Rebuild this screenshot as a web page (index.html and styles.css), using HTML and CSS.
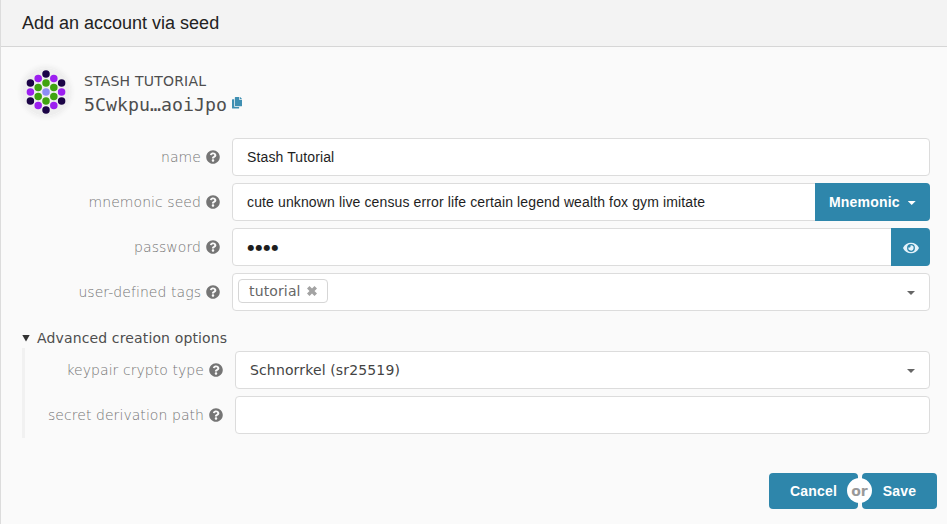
FILE: index.html
```
<!DOCTYPE html>
<html lang="en">
<head>
<meta charset="utf-8">
<title>Add an account via seed</title>
<link rel="stylesheet" href="styles.css">
</head>
<body>
<svg class="defs" width="0" height="0" aria-hidden="true">
  <symbol id="help" viewBox="0 0 512 512"><path d="M504 256c0 136.997-111.043 248-248 248S8 392.997 8 256C8 119.083 119.043 8 256 8s248 111.083 248 248zM262.655 90c-54.497 0-89.255 22.957-116.549 63.758-3.536 5.286-2.353 12.415 2.715 16.258l34.699 26.31c5.205 3.947 12.621 3.008 16.665-2.122 17.864-22.658 30.113-35.797 57.303-35.797 20.429 0 45.698 13.148 45.698 32.958 0 14.976-12.363 22.667-32.534 33.976C247.128 238.528 216 254.941 216 296v4c0 6.627 5.373 12 12 12h56c6.627 0 12-5.373 12-12v-1.333c0-28.462 83.186-29.647 83.186-106.667 0-58.002-60.165-102-116.531-102zM256 338c-25.365 0-46 20.635-46 46 0 25.364 20.635 46 46 46s46-20.636 46-46c0-25.365-20.635-46-46-46z"/></symbol>
</svg>
<main class="modal">
  <header class="modal-header">Add an account via seed</header>
  <form class="content">
    <section class="address">
      <svg class="identicon" viewBox="0 0 64 64">
        <circle cx="32" cy="32" r="32" fill="#eee"/>
        <g fill="#1b0446"><circle cx="32" cy="8" r="5"/><circle cx="11.2" cy="20" r="5"/><circle cx="11.2" cy="44" r="5"/><circle cx="32" cy="56" r="5"/><circle cx="52.8" cy="44" r="5"/><circle cx="52.8" cy="20" r="5"/></g>
        <g fill="#9c1ff0"><circle cx="21.6" cy="14" r="5"/><circle cx="11.2" cy="32" r="5"/><circle cx="21.6" cy="50" r="5"/><circle cx="42.4" cy="50" r="5"/><circle cx="52.8" cy="32" r="5"/><circle cx="42.4" cy="14" r="5"/></g>
        <g fill="#3fa30f"><circle cx="32" cy="20" r="5"/><circle cx="21.6" cy="26" r="5"/><circle cx="21.6" cy="38" r="5"/><circle cx="32" cy="44" r="5"/><circle cx="42.4" cy="38" r="5"/><circle cx="42.4" cy="26" r="5"/></g>
        <circle cx="32" cy="32" r="5" fill="#8c8cf5"/>
      </svg>
      <div class="identity">
        <div class="account-name">STASH TUTORIAL</div>
        <div class="account-id"><span>5Cwkpu…aoiJpo</span>
          <svg class="copy" viewBox="0 0 448 512"><path d="M320 448v40c0 13.255-10.745 24-24 24H24c-13.255 0-24-10.745-24-24V120c0-13.255 10.745-24 24-24h72v296c0 30.879 25.121 56 56 56h168zm0-344V0H152c-13.255 0-24 10.745-24 24v368c0 13.255 10.745 24 24 24h272c13.255 0 24-10.745 24-24V128H344c-13.2 0-24-10.8-24-24zm121-31L375 7A24 24 0 0 0 358 0h-6v96h96v-6a24 24 0 0 0-7-17z"/></svg>
        </div>
      </div>
    </section>
    <div class="rows">
      <div class="row"><label>name<svg class="help"><use href="#help"/></svg></label><div class="field"><span class="value">Stash Tutorial</span></div></div>
      <div class="row"><label>mnemonic seed<svg class="help"><use href="#help"/></svg></label><div class="field"><span class="value">cute unknown live census error life certain legend wealth fox gym imitate</span><div class="action type">Mnemonic<i class="caret"></i></div></div></div>
      <div class="row"><label>password<svg class="help"><use href="#help"/></svg></label><div class="field"><span class="value dots">●●●●</span><div class="action eye"><svg viewBox="0 0 576 512"><path d="M572.52 241.4C518.29 135.59 410.93 64 288 64S57.68 135.64 3.48 241.41a32.35 32.35 0 0 0 0 29.19C57.71 376.41 165.07 448 288 448s230.32-71.64 284.52-177.41a32.35 32.35 0 0 0 0-29.19zM288 400a144 144 0 1 1 144-144 143.93 143.93 0 0 1-144 144zm0-240a95.31 95.31 0 0 0-25.31 3.79 47.85 47.85 0 0 1-66.9 66.9A95.78 95.78 0 1 0 288 160z"/></svg></div></div></div>
      <div class="row"><label>user-defined tags<svg class="help"><use href="#help"/></svg></label><div class="field select"><span class="tag">tutorial<svg viewBox="0 0 10 10"><path d="M2.5 0 5 2.5 7.5 0 10 2.5 7.5 5 10 7.5 7.5 10 5 7.5 2.5 10 0 7.5 2.5 5 0 2.5z"/></svg></span><i class="caret"></i></div></div>
    </div>
    <div class="summary"><i class="disclosure"></i>Advanced creation options</div>
    <div class="rows advanced">
      <div class="row"><label>keypair crypto type<svg class="help"><use href="#help"/></svg></label><div class="field select"><span class="option">Schnorrkel (sr25519)</span><i class="caret"></i></div></div>
      <div class="row"><label>secret derivation path<svg class="help"><use href="#help"/></svg></label><div class="field"></div></div>
    </div>
  </form>
  <footer class="actions">
    <div class="button cancel">Cancel</div>
    <div class="button save">Save<span class="or">or</span></div>
  </footer>
</main>
</body>
</html>
```
FILE: styles.css
```
* { box-sizing: border-box; }
body {
  margin: 0;
  background: #fafafa;
  color: #4e4e4e;
  font: 14px/20px "DejaVu Sans", sans-serif;
  letter-spacing: .14px;
  overflow: hidden;
}
.defs { display: block; }
.modal { height: 524px; border-left: 1px solid #dcdcdc; }
.modal-header {
  height: 47px;
  padding: 0 21px;
  background: #f3f3f3;
  border-bottom: 1px solid #d6d6d6;
  color: #222;
  font: 18px/46px "Liberation Sans", sans-serif;
  letter-spacing: 0;
}
.content { padding: 20px 17px 0 21px; }
.address { display: flex; height: 71px; }
.identicon {
  width: 48px;
  height: 48px;
  margin-top: .5px;
  border-radius: 50%;
  box-shadow: 0 0 5px 1px #e9e9e9;
}
.identity { padding: 4px 0 0 14px; }
.account-name { letter-spacing: .2px; }
.account-id {
  display: flex;
  gap: 5px;
  height: 26px;
  margin-top: 1px;
  font: 18.2px/26px "DejaVu Sans Mono", monospace;
  letter-spacing: .05px;
}
.copy { width: 10px; height: 11.5px; margin-top: 5px; fill: #3f8fb2; }
.rows { display: grid; gap: 7px; }
.row { display: grid; grid-template-columns: 198px 1fr; gap: 12px; height: 38px; }
label {
  display: flex;
  align-items: center;
  justify-content: flex-end;
  gap: 5px;
  color: #757575;
  font-family: "DejaVu Sans", "DejaVu Sans Light", sans-serif;
  font-weight: 100;
  letter-spacing: .06px;
}
.help { width: 14px; height: 14px; fill: #757575; }
.field {
  display: flex;
  align-items: center;
  height: 38px;
  background: #fff;
  border: 1px solid #dcdcdc;
  border-radius: 4px;
}
.value {
  flex: 1;
  padding-left: 14px;
  color: #1e1e1e;
  font: 14px/20px "Liberation Sans", sans-serif;
  letter-spacing: .125px;
}
.dots { padding: 1px 0 0 14.5px; font: 8px/20px "DejaVu Sans", sans-serif; letter-spacing: 1px; }
.action {
  display: flex;
  align-items: center;
  align-self: stretch;
  margin: -1px -1px -1px 0;
  background: #2e86ab;
  border-radius: 0 4px 4px 0;
  color: #fff;
}
.type {
  width: 115px;
  padding-left: 14px;
  gap: 8px;
  font: bold 14px/20px "Liberation Sans", sans-serif;
  letter-spacing: .18px;
}
.eye { justify-content: center; width: 39px; }
.eye svg { width: 16px; height: 14px; margin-top: 2px; fill: #e4f2fa; }
.caret {
  width: 8px;
  height: 4px;
  margin-top: 2px;
  background: currentColor;
  clip-path: polygon(0 0, 100% 0, 50% 100%);
}
.select { justify-content: space-between; padding: 0 14px 0 14px; color: #444; }
.select .caret { background: #666; }
.tag {
  display: flex;
  align-items: center;
  gap: 6px;
  width: 90px;
  height: 24px;
  margin: -2px 0 0 -9px;
  padding-left: 10px;
  border: 1px solid #d6d6d6;
  border-radius: 4px;
  color: #666;
}
.tag svg { width: 10px; height: 10px; fill: #a3a3a3; }
.summary { display: flex; align-items: center; gap: 7px; margin-top: 17px; }
.disclosure {
  width: 8px;
  height: 7px;
  background: #333;
  clip-path: polygon(0 0, 100% 0, 50% 100%);
}
.advanced { padding: 3px 0 4px; border-left: 3px solid #f1f1f1; }
.actions { display: flex; justify-content: flex-end; gap: 4px; padding: 35px 10px 0; }
.button {
  height: 36px;
  background: #2e86ab;
  border-radius: 4px;
  color: #fff;
  text-align: center;
  font: bold 14px/36px "Liberation Sans", sans-serif;
  letter-spacing: .2px;
}
.cancel { width: 89px; }
.save { position: relative; width: 75px; }
.or {
  position: absolute;
  left: -15px;
  top: 5px;
  width: 25px;
  height: 25px;
  border-radius: 50%;
  background: #fff;
  color: #999;
  font: bold 14px/26px "DejaVu Sans", sans-serif;
  letter-spacing: 0;
}
```
